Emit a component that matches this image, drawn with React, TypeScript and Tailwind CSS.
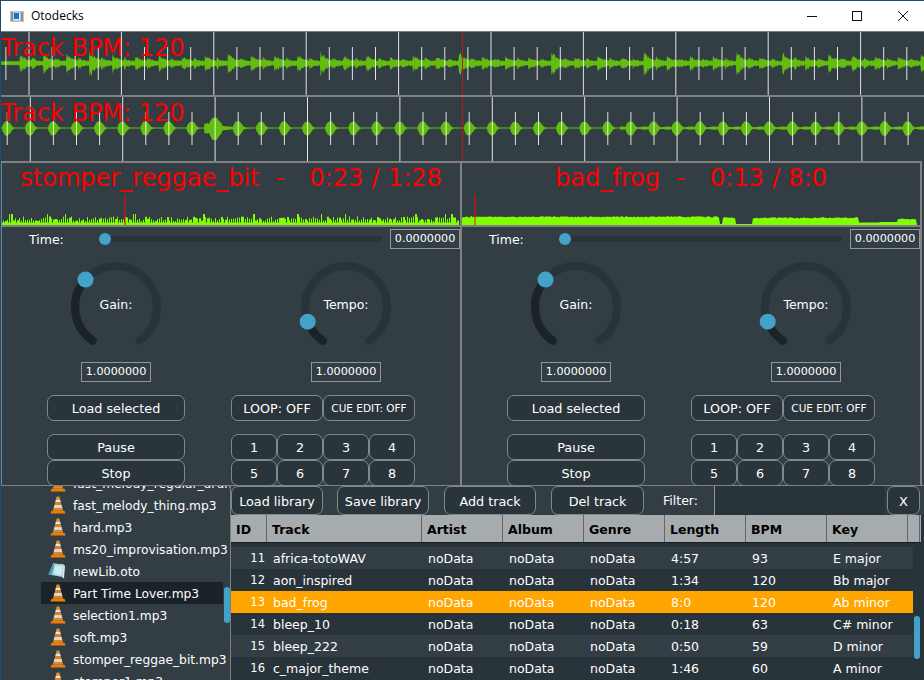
import React from "react";

const FONT = "font-['DejaVu_Sans',sans-serif]";

// small seeded random so the waveforms stay the same on each render
function makeRandom(seed: number) {
  let s = seed;
  return () => {
    s = (s * 16807) % 2147483647;
    return s / 2147483647;
  };
}

function wavePath(center: number, env: (x: number) => number, seed: number, jitter: number) {
  const rnd = makeRandom(seed);
  const top: string[] = [];
  const bottom: string[] = [];
  for (let x = 1; x <= 924; x += 0.5) {
    const a = env(x) * (1 - jitter + rnd() * jitter * 2);
    top.push(`${x} ${(center - a * 0.9).toFixed(1)}`);
    bottom.unshift(`${x} ${(center + a * 1.05).toFixed(1)}`);
  }
  return `M${top.join("L")}L${bottom.join("L")}Z`;
}

const hitAmps = [6, 7, 8, 10, 6, 5, 6, 5, 6, 7, 6, 6, 6, 9, 5, 6, 4, 6, 5, 10, 5, 5, 4, 9, 4, 5, 4, 9, 5, 5, 5, 10, 4, 8, 4, 8, 6, 5, 5, 6, 4, 8, 6, 6];

function topEnv(x: number) {
  let a = 2;
  hitAmps.forEach((amp, i) => {
    const p = 21 + i * 23.1;
    if (x >= p - 1) a += amp * Math.exp(-(x - p + 1) / 6);
    if (x >= p + 11) a += 2.8 * Math.exp(-(x - p - 11) / 3.5);
  });
  return a;
}

function bottomEnv(x: number) {
  let a = 0.55;
  for (let i = 0; i < 41; i++) {
    const p = 7 + i * 23.1;
    const d = x - p;
    if (d > -5 && d < 9) a += 6.5 * Math.exp(-Math.pow(Math.abs(d + 0.5) / (d < 0 ? 4 : 5), 3));
    if (x > 620 && d > 6 && d < 22) a += 1.1 * Math.exp(-Math.pow((d - 14) / 5, 2));
  }
  if (x > 204 && x < 222) a += 4.5;
  if (x >= 222 && x < 250) a += 2 * Math.exp(-(x - 222) / 10);
  return a;
}

function beats(first: number) {
  const list: { x: number; major: boolean }[] = [];
  for (let i = -1; i < 42; i++) {
    const x = first + i * 23.1;
    if (x > 1) list.push({ x, major: i >= 0 && i % 4 === 0 });
  }
  return list;
}

function BeatWave(props: { top: number; height: number; first: number; tickTop: number; tickBottom: number; path: string }) {
  const { top, height, first, tickTop, tickBottom, path } = props;
  return (
    <svg width="923" height={height} viewBox={`1 ${top} 923 ${height}`} className="block">
      <path d={path} fill="#62bd0e" />
      {beats(first).map((b, i) =>
        b.major ? (
          <line key={i} x1={b.x} x2={b.x} y1={top} y2={top + height} stroke="#ffffff" strokeWidth="1" opacity="0.85" />
        ) : (
          <line key={i} x1={b.x} x2={b.x} y1={tickTop} y2={tickBottom} stroke="#ffffff" strokeWidth="1" opacity="0.85" />
        ),
      )}
      <rect x="462" y={top} width="1" height={height} fill="#b01e1e" />
    </svg>
  );
}

function WaveRow(props: { className: string; children: React.ReactNode }) {
  return (
    <div className={`relative overflow-hidden bg-[#323e44] border-[#808080] ${props.className}`}>
      {props.children}
      <span className="absolute left-0 top-[1px] text-[24px] leading-[30px] text-[#ff0000] whitespace-pre">Track BPM: 120</span>
    </div>
  );
}

function overviewSpikes() {
  const rnd = makeRandom(77);
  let d = "M0 12V9.5H456V12z";
  for (let x = 1; x < 456; x += 2) {
    const r = rnd();
    const h = r > 0.95 ? 11 : 4 + rnd() * 4.5;
    const w = rnd() > 0.75 ? 2 : 1;
    d += `M${x} 12V${(12 - h).toFixed(1)}h${w}V12z`;
  }
  return d;
}

function overviewBlock() {
  const rnd = makeRandom(31);
  const level = (x: number) => {
    if (x < 258) return 7.5;
    if (x < 261) return 1;
    if (x < 274) return 6.5;
    if (x < 291) return 1;
    if (x < 397) return 6.5;
    if (x < 418) return 2.5;
    if (x < 436) return 3;
    return 5.5;
  };
  let d = "M0 12";
  for (let x = 0; x < 455; x += 1) {
    d += `L${x} ${(12 - level(x) - (level(x) > 4 ? rnd() * 1.4 : 0)).toFixed(1)}`;
  }
  return d + "L455 12Z";
}

function Button(props: { label: string; className?: string }) {
  return (
    <button className={`flex items-center justify-center pt-[1px] h-[26px] rounded-[7px] border border-[#7f8a8e] bg-[#2a353b] text-white whitespace-nowrap ${props.className ?? "text-[12.75px]"}`}>
      {props.label}
    </button>
  );
}

function ValueBox(props: { className?: string; children: React.ReactNode }) {
  return <div className={`flex items-center justify-center pt-[1px] w-[70px] h-[20px] border border-[#8e989b] text-[11.2px] text-white ${props.className ?? ""}`}>{props.children}</div>;
}

function polar(deg: number) {
  const r = (deg * Math.PI) / 180;
  return `${(50 + 41 * Math.sin(r)).toFixed(2)} ${(50 - 41 * Math.cos(r)).toFixed(2)}`;
}

function Rotary(props: { label: string; angle: number }) {
  const { label, angle } = props;
  const start = -145.4;
  const r = (angle * Math.PI) / 180;
  return (
    <div className="relative w-[100px] h-[95px]">
      <svg width="100" height="95" viewBox="0 0 100 95" className="block">
        <path d={`M${polar(start)}A41 41 0 1 1 ${polar(-start)}`} fill="none" stroke="#29343a" strokeWidth="8" strokeLinecap="round" />
        <path d={`M${polar(start)}A41 41 0 ${angle - start > 180 ? 1 : 0} 1 ${polar(angle)}`} fill="none" stroke="#1a2327" strokeWidth="8" strokeLinecap="round" />
        <circle cx={50 + 41 * Math.sin(r)} cy={50 - 41 * Math.cos(r)} r="8" fill="#42a2c8" />
      </svg>
      <span className="absolute left-0 right-0 top-[40px] text-center text-[12.5px] leading-[16px] text-white">{label}</span>
    </div>
  );
}

function Deck(props: { title: string; playhead: number; spikes: string; className: string }) {
  const { title, playhead, spikes, className } = props;
  return (
    <div className={`h-[324px] overflow-hidden bg-[#323e44] border-t-2 border-l border-[#808080] ${className}`}>
      <div className="h-[64px] border-b-2 border-[#808080]">
        <div className="h-[32px] text-center text-[24px] leading-[30px] [word-spacing:0.6px] text-[#ff0000] whitespace-pre">{title}</div>
        <svg width="458" height="30" viewBox="0 -18 458 30" className="block">
          <path d={spikes} fill="#7fff00" />
          <rect x={playhead} y="-18" width="1" height="30" fill="#ff0000" />
        </svg>
      </div>
      <div className="flex items-center h-[21px] mt-[1px] pl-[27px]">
        <span className="w-[71px] pt-[3px] text-[12.5px] text-white">Time:</span>
        <div className="relative w-[283px] h-[6px] mt-[1px] rounded-full bg-[#29343a]">
          <span className="absolute left-[-1px] top-[-3px] w-[12px] h-[12px] rounded-full bg-[#42a2c8]" />
        </div>
        <ValueBox className="ml-[8px]">0.0000000</ValueBox>
      </div>
      <div className="flex">
        <div className="flex flex-col items-center shrink-0 w-[228px]">
          <div className="mt-[8px]">
            <Rotary label="Gain:" angle={-48} />
          </div>
          <ValueBox className="mt-[10px]">1.0000000</ValueBox>
          <Button label="Load selected" className="w-[138px] mt-[13px] text-[12.75px]" />
          <Button label="Pause" className="w-[138px] mt-[13px] text-[12.75px]" />
          <Button label="Stop" className="w-[138px] text-[12.75px]" />
        </div>
        <div className="flex flex-col items-center shrink-0 w-[230px] ml-[1px]">
          <div className="mt-[8px]">
            <Rotary label="Tempo:" angle={-111} />
          </div>
          <ValueBox className="mt-[10px]">1.0000000</ValueBox>
          <div className="flex self-start mt-[13px]">
            <Button label="LOOP: OFF" className="w-[92px] text-[12.75px]" />
            <Button label="CUE EDIT: OFF" className="w-[92px] text-[10.5px]" />
          </div>
          <div className="grid grid-cols-4 self-start mt-[13px] w-[184px]">
            {["1", "2", "3", "4", "5", "6", "7", "8"].map((n) => (
              <Button key={n} label={n} className="text-[12.75px]" />
            ))}
          </div>
        </div>
      </div>
    </div>
  );
}

function ConeIcon() {
  return (
    <svg width="16" height="18" viewBox="0 0 16 18" className="shrink-0">
      <path d="M6.6 0.5h2.8l.7 3H5.9z" fill="#f08a12" />
      <path d="M5.9 3.5h4.2l.8 3H5.1z" fill="#e6e6e6" />
      <path d="M5.1 6.5h5.8l.7 2.5H4.4z" fill="#f07c0c" />
      <path d="M4.4 9h7.2l.9 3.5H3.5z" fill="#d8d8d8" />
      <path d="M3.5 12.5h9l.6 2.2H2.9z" fill="#f28a10" />
      <path d="M1.5 14.7h13l1 2.8H.5z" fill="#ee7d0a" />
    </svg>
  );
}

function DocIcon() {
  return (
    <svg width="18" height="16" viewBox="0 0 18 16" className="shrink-0 ml-[-2px]">
      <path d="M5 0.5L15.5 1.5L17 3L16 15.5L14.5 14.5z" fill="#dfe6e6" />
      <path d="M5 0.5L15.5 1.5L14.5 14L0.5 11.5z" fill="#9fd4e2" />
      <path d="M7 2.5L14.5 3L13.5 12.5L6 11z" fill="#cfeaf1" />
      <path d="M0.5 11.5L5 0.5L6.5 1L3.5 12z" fill="#4d97ad" />
    </svg>
  );
}

const files = [
  "fast_melody_regular_drums.mp3",
  "fast_melody_thing.mp3",
  "hard.mp3",
  "ms20_improvisation.mp3",
  "newLib.oto",
  "Part Time Lover.mp3",
  "selection1.mp3",
  "soft.mp3",
  "stomper_reggae_bit.mp3",
  "stomper1.mp3",
];

function FileList() {
  return (
    <div className="relative w-[230px] h-[194px] overflow-hidden border-r border-[#808080] bg-[#323e44]">
      <div className="mt-[-14px] pl-[40px] pr-[7px]">
        {files.map((f) => (
          <div key={f} className={`flex items-center h-[22px] pl-[9px] gap-[7px] text-[12.25px] text-white whitespace-nowrap ${f.startsWith("Part") ? "bg-[#1a2327]" : ""}`}>
            {f.endsWith(".oto") ? <DocIcon /> : <ConeIcon />}
            <span className="pt-[2px]">{f}</span>
          </div>
        ))}
      </div>
      <span className="absolute left-[223px] top-[101px] w-[6px] h-[36px] rounded-full bg-[#42a2c8]" />
    </div>
  );
}

const tracks = [
  ["11", "africa-totoWAV", "4:57", "93", "E major"],
  ["12", "aon_inspired", "1:34", "120", "Bb major"],
  ["13", "bad_frog", "8:0", "120", "Ab minor"],
  ["14", "bleep_10", "0:18", "63", "C# minor"],
  ["15", "bleep_222", "0:50", "59", "D minor"],
  ["16", "c_major_theme", "1:46", "60", "A minor"],
];

const headers = ["ID", "Track", "Artist", "Album", "Genre", "Length", "BPM", "Key", ""];

function Library() {
  return (
    <div className="flex-1 min-w-0 h-[194px] overflow-hidden bg-[#29343a]">
      <div className="flex items-center h-[29px] bg-[#323e44]">
        <Button label="Load library" className="w-[92px] h-[29px] !pt-[2px] text-[12.75px]" />
        <Button label="Save library" className="w-[92px] h-[29px] !pt-[2px] ml-[14px] text-[12.75px]" />
        <Button label="Add track" className="w-[92px] h-[29px] !pt-[2px] ml-[15px] text-[12.75px]" />
        <Button label="Del track" className="w-[93px] h-[29px] !pt-[2px] ml-[15px] text-[12.75px]" />
        <span className="ml-[19px] w-[51px] pt-[2px] text-[12.5px] text-white">Filter:</span>
        <div className="w-[171px] h-[29px] bg-[#29343a] border-l border-[#8e989b]" />
        <Button label="X" className="w-[33px] h-[29px] !pt-[2px] ml-[2px] text-[13px]" />
      </div>
      <div className="grid grid-cols-[36px_155px_81px_81px_81px_81px_81px_81px_12px] w-[690px] h-[28px] bg-[#a6abae] border-b border-[#181f22]">
        {headers.map((h) => (
          <div key={h} className="flex items-center pl-[5px] pt-[3px] text-[12.5px] font-bold text-black border-r border-[#5f686c]">
            {h}
          </div>
        ))}
      </div>
      <div className="relative pt-[4px]">
        {tracks.map((t, i) => (
          <div
            key={t[0]}
            className={`grid grid-cols-[36px_155px_81px_81px_81px_81px_81px_85px] items-center pt-[2px] w-[682px] h-[22px] text-[12.5px] text-white ${
              t[0] === "13" ? "bg-[#ffa500]" : i % 2 === 0 ? "bg-[#323e44]" : "bg-[#29343a]"
            }`}
          >
            <span className="pr-[2px] text-right text-[11.5px]">{t[0]}</span>
            <span className="pl-[6px]">{t[1]}</span>
            <span className="pl-[6px]">noData</span>
            <span className="pl-[6px]">noData</span>
            <span className="pl-[6px]">noData</span>
            <span className="pl-[6px]">{t[2]}</span>
            <span className="pl-[6px]">{t[3]}</span>
            <span className="pl-[6px]">{t[4]}</span>
          </div>
        ))}
        <span className="absolute left-[683px] top-[73px] w-[6px] h-[43px] rounded-full bg-[#42a2c8]" />
      </div>
    </div>
  );
}

function TitleBar() {
  return (
    <div className="flex items-center h-[30px] bg-white pl-[9px] text-black">
      <svg width="14" height="11" viewBox="0 0 14 11" className="shrink-0">
        <rect width="14" height="11" fill="#c4c4c4" />
        <rect x="1" y="1" width="2" height="9" fill="#8f8f8f" />
        <rect x="11" y="1" width="2" height="9" fill="#8f8f8f" />
        <rect x="4" y="2" width="6" height="7" fill="#e8f2fb" />
        <rect x="4" y="2" width="5" height="6" fill="#0a78d7" />
      </svg>
      <span className="ml-[7px] text-[12px] font-['Open_Sans',sans-serif]">Otodecks</span>
      <div className="flex ml-auto text-black">
        <svg width="46" height="30" viewBox="0 0 46 30">
          <rect x="20" y="15" width="10" height="1" fill="#111" />
        </svg>
        <svg width="46" height="30" viewBox="0 0 46 30">
          <rect x="19.5" y="10.5" width="9" height="9" fill="none" stroke="#111" />
        </svg>
        <svg width="46" height="30" viewBox="0 0 46 30" className="mr-[-1px]">
          <path d="M19 10l10 10M29 10L19 20" stroke="#111" fill="none" />
        </svg>
      </div>
    </div>
  );
}

export default function App() {
  const topPath = wavePath(63, topEnv, 11, 0.3);
  const bottomPath = wavePath(128, bottomEnv, 23, 0.08);
  return (
    <div className={`w-[924px] h-[680px] overflow-hidden bg-[#323e44] border-t border-[#1b4e73] ${FONT}`}>
      <div className="border-l border-[#1b4e73]">
        <TitleBar />
        <WaveRow className="h-[64px] border-t">
          <BeatWave top={32} height={63} first={29} tickTop={47} tickBottom={80} path={topPath} />
        </WaveRow>
        <WaveRow className="h-[66px] border-t-2">
          <BeatWave top={97} height={64} first={30.3} tickTop={112} tickBottom={145} path={bottomPath} />
        </WaveRow>
        <div className="flex">
          <Deck title="stomper_reggae_bit  -   0:23 / 1:28" playhead={122.5} spikes={overviewSpikes()} className="w-[460px] border-r" />
          <Deck title="bad_frog  -   0:13 / 8:0" playhead={12.5} spikes={overviewBlock()} className="w-[461px] border-r-2" />
        </div>
        <div className="flex border-t border-[#808080]">
          <FileList />
          <Library />
        </div>
      </div>
    </div>
  );
}
